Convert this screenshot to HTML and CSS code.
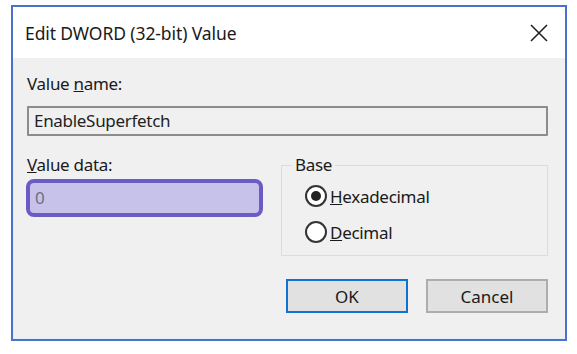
FILE: index.html
```html
<!DOCTYPE html>
<html lang="en">
<head>
    <meta charset="UTF-8">
    <title>Edit DWORD (32-bit) Value</title>
    <link rel="stylesheet" href="styles.css">
</head>
<body>
    <div class="dialog">
        <div class="title-bar">
            <span class="title">Edit DWORD (32-bit) Value</span>
            <svg class="close" width="20" height="20" viewBox="0 0 20 20">
                <path d="M2 2 L18 18 M18 2 L2 18" stroke="#222" stroke-width="1.6" fill="none"/>
            </svg>
        </div>
        <div class="content">
            <label class="field-label">Value <u>n</u>ame:</label>
            <div class="text-box readonly">EnableSuperfetch</div>

            <div class="middle">
                <div class="data-col">
                    <label class="field-label"><u>V</u>alue data:</label>
                    <div class="text-box highlight">0</div>
                </div>
                <fieldset class="base">
                    <legend>Base</legend>
                    <div class="radio"><span class="dot checked"></span><u>H</u>exadecimal</div>
                    <div class="radio"><span class="dot"></span><u>D</u>ecimal</div>
                </fieldset>
            </div>

            <div class="buttons">
                <button class="btn default">OK</button>
                <button class="btn">Cancel</button>
            </div>
        </div>
    </div>
</body>
</html>
```

FILE: styles.css
```css
body {
    margin: 0;
    background: #fff;
    font-family: "Noto Sans", "Open Sans", sans-serif;
    color: #1a1a1a;
}

.dialog {
    margin: 5px 0 0 11px;
    width: 552px;
    height: 332px;
    border: 2px solid #4a72c8;
    background: #f0f0f0;
    display: flex;
    flex-direction: column;
}

.title-bar {
    height: 51px;
    background: #fff;
    display: flex;
    align-items: center;
    justify-content: space-between;
    padding: 0 16px 0 12px;
}

.title {
    font-size: 17.5px;
    letter-spacing: -0.1px;
}

.close {
    margin-top: 1px;
}

.content {
    flex: 1;
    padding: 14px 17px 0 13px;
    border-left: 1px solid #e4eef9;
    border-bottom: 1px solid #e4eef9;
}

.field-label {
    display: block;
    font-size: 17px;
    letter-spacing: -0.3px;
    line-height: 24px;
}

.text-box {
    font-size: 17px;
    letter-spacing: -0.3px;
    padding: 0 5px;
}

.readonly {
    margin-top: 10px;
    height: 26px;
    line-height: 26px;
    border: 2px solid #8c8c8c;
    border-radius: 1px;
    color: #222;
}

.middle {
    display: flex;
    align-items: flex-start;
    gap: 18px;
    margin-top: 10px;
}

.data-col {
    width: 236px;
    padding-top: 7px;
}

.highlight {
    margin-top: 2px;
    margin-left: -1px;
    height: 30px;
    line-height: 30px;
    border: 4px solid #6a5cc4;
    border-radius: 8px;
    background: #c7c2ea;
    color: #6e6e80;
    padding: 0 5px;
}

.base {
    flex: 1;
    margin: 9px 0 0 0;
    padding: 3px 0 0 23px;
    height: 96px;
    border: 1px solid #dcdcdc;
    font-size: 17px;
    letter-spacing: -0.3px;
}

.base legend {
    padding: 0 3px;
    margin-left: -13px;
    line-height: 20px;
}

.radio {
    display: flex;
    align-items: center;
    height: 36px;
}

.dot {
    width: 18px;
    height: 18px;
    border: 2px solid #333;
    border-radius: 50%;
    background: #fff;
    margin-right: 3px;
    position: relative;
}

.dot.checked::after {
    content: "";
    position: absolute;
    left: 4px;
    top: 4px;
    width: 10px;
    height: 10px;
    border-radius: 50%;
    background: #222;
}

.buttons {
    display: flex;
    justify-content: flex-end;
    gap: 18px;
    margin-top: 23px;
}

.btn {
    width: 122px;
    height: 34px;
    font-family: inherit;
    font-size: 17px;
    color: #1a1a1a;
    background: #e1e1e1;
    border: 2px solid #adadad;
}

.btn.default {
    border-color: #0f72d0;
}
```
